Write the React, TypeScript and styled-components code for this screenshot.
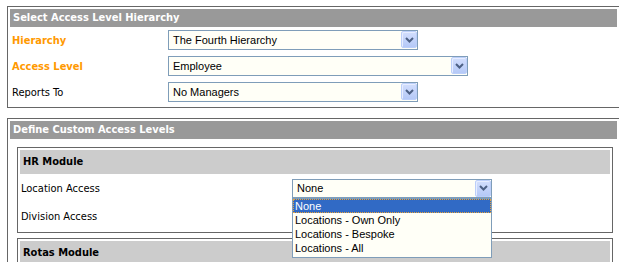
import React from 'react';
import styled, { createGlobalStyle } from 'styled-components';

const GlobalStyle = createGlobalStyle`
  html, body {
    margin: 0;
    padding: 0;
    background: #fff;
    overflow: hidden;
  }
  body {
    font-family: "DejaVu Sans Condensed", "DejaVu Sans", sans-serif;
    font-size: 11px;
    color: #000;
  }
`;

const Chevron: React.FC = () => (
  <svg width="9" height="6" viewBox="0 0 9 6">
    <path d="M1 1 L4.5 4.5 L8 1" fill="none" stroke="#4d6185" strokeWidth="2" />
  </svg>
);

const App: React.FC = () => {
  return (
    <>
      <GlobalStyle />
      <Page>
        <Panel>
          <PanelHeader>Select Access Level Hierarchy</PanelHeader>
          <FieldRow>
            <Label $accent>Hierarchy</Label>
            <SelectBox $width={250}>
              <SelectValue>The Fourth Hierarchy</SelectValue>
              <ArrowButton><Chevron /></ArrowButton>
            </SelectBox>
          </FieldRow>
          <FieldRow>
            <Label $accent>Access Level</Label>
            <SelectBox $width={300}>
              <SelectValue>Employee</SelectValue>
              <ArrowButton><Chevron /></ArrowButton>
            </SelectBox>
          </FieldRow>
          <FieldRow>
            <Label>Reports To</Label>
            <SelectBox $width={250}>
              <SelectValue>No Managers</SelectValue>
              <ArrowButton><Chevron /></ArrowButton>
            </SelectBox>
          </FieldRow>
        </Panel>

        <Panel $gap>
          <PanelHeader>Define Custom Access Levels</PanelHeader>
          <ModulePanel>
            <ModuleHeader>HR Module</ModuleHeader>
            <ModuleRow>
              <ModuleLabel>Location Access</ModuleLabel>
              <SelectWrap>
                <SelectBox $width={200} $height={19}>
                  <SelectValue>None</SelectValue>
                  <ArrowButton><Chevron /></ArrowButton>
                </SelectBox>
                <DropdownList>
                  <Option $selected>None</Option>
                  <Option>Locations - Own Only</Option>
                  <Option>Locations - Bespoke</Option>
                  <Option>Locations - All</Option>
                </DropdownList>
              </SelectWrap>
            </ModuleRow>
            <ModuleRow>
              <ModuleLabel>Division Access</ModuleLabel>
            </ModuleRow>
          </ModulePanel>
          <ModulePanel $tight>
            <ModuleHeader $short>Rotas Module</ModuleHeader>
          </ModulePanel>
        </Panel>
      </Page>
    </>
  );
};

const Page = styled.div`
  padding: 6px 0 0 7px;
  width: 619px;
  height: 262px;
  box-sizing: border-box;
  overflow: hidden;
`;

const Panel = styled.div<{ $gap?: boolean }>`
  width: 613px;
  box-sizing: border-box;
  border: 1px solid #666;
  border-bottom: ${p => (p.$gap ? 'none' : '1px solid #666')};
  padding: 2px;
  padding-bottom: ${p => (p.$gap ? '0' : '2px')};
  margin-top: ${p => (p.$gap ? '10px' : '0')};
`;

const PanelHeader = styled.div`
  height: 18px;
  line-height: 18px;
  background: #999;
  color: #fff;
  font-weight: bold;
  font-size: 11px;
  padding-left: 3px;
`;

const FieldRow = styled.div`
  display: flex;
  align-items: center;
  height: 26px;
`;

const Label = styled.div<{ $accent?: boolean }>`
  width: 158px;
  padding-left: 2px;
  box-sizing: border-box;
  color: ${p => (p.$accent ? '#ff9900' : '#000')};
  font-weight: ${p => (p.$accent ? 'bold' : 'normal')};
`;

const SelectWrap = styled.div`
  position: relative;
`;

const SelectBox = styled.div<{ $width: number; $height?: number }>`
  display: flex;
  width: ${p => p.$width}px;
  height: ${p => p.$height ?? 20}px;
  box-sizing: border-box;
  border: 1px solid #7f9db9;
  background: #fffff7;
`;

const SelectValue = styled.div`
  flex: 1;
  padding-left: 4px;
  align-self: center;
  font-family: "Liberation Sans", Arial, sans-serif;
  font-size: 11px;
  color: #000;
`;

const ArrowButton = styled.div`
  width: 16px;
  height: 17px;
  box-sizing: border-box;
  display: flex;
  align-items: center;
  justify-content: center;
  border: 1px solid #bccffa;
  border-radius: 2px;
  background: linear-gradient(#d2defd, #b5c9f7);
  box-shadow: inset 1px 1px 0 #e6edff;
`;

const ModulePanel = styled.div<{ $tight?: boolean }>`
  margin: ${p => (p.$tight ? '5px' : '8px')} 4px 0 7px;
  border: 1px solid #666;
  border-bottom: ${p => (p.$tight ? 'none' : '1px solid #666')};
  padding: 2px;
  padding-bottom: ${p => (p.$tight ? '0' : '2px')};
`;

const ModuleHeader = styled.div<{ $short?: boolean }>`
  height: ${p => (p.$short ? '21px' : '24px')};
  line-height: 24px;
  background: #ccc;
  font-weight: bold;
  font-size: 11px;
  color: #000;
  padding-left: 3px;
  overflow: visible;
`;

const ModuleRow = styled.div`
  display: flex;
  align-items: center;
  height: 28px;
`;

const ModuleLabel = styled.div`
  width: 272px;
  padding-left: 1px;
  box-sizing: border-box;
`;

const DropdownList = styled.div`
  position: absolute;
  top: 100%;
  left: 0;
  width: 200px;
  box-sizing: border-box;
  border: 1px solid #7f9db9;
  background: #fffff7;
  padding-bottom: 2px;
  z-index: 2;
`;

const Option = styled.div<{ $selected?: boolean }>`
  height: 14px;
  line-height: 14px;
  padding-left: 2px;
  font-family: "Liberation Sans", Arial, sans-serif;
  font-size: 11px;
  background: ${p => (p.$selected ? '#316ac5' : 'transparent')};
  color: ${p => (p.$selected ? '#fff' : '#000')};
  outline: ${p => (p.$selected ? '1px dotted #e8a33b' : 'none')};
  outline-offset: -1px;
`;

export default App;
